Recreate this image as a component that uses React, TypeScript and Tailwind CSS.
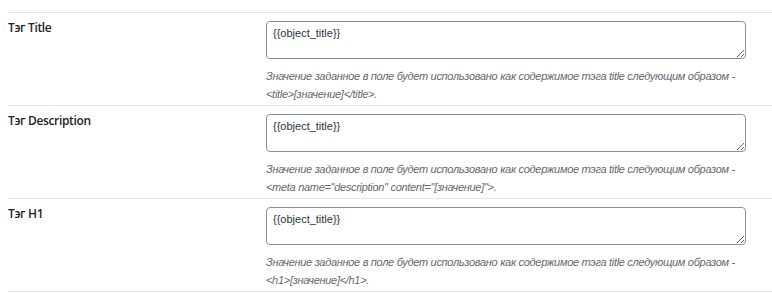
const rows = [
  {
    label: "Тэг Title",
    value: "{{object_title}}",
    tag: (
      <>
        &lt;title&gt;[значение]&lt;/title&gt;.
      </>
    ),
  },
  {
    label: "Тэг Description",
    value: "{{object_title}}",
    tag: (
      <>
        &lt;meta name="description" content="[значение]"&gt;.
      </>
    ),
  },
  {
    label: "Тэг H1",
    value: "{{object_title}}",
    tag: (
      <>
        &lt;h1&gt;[значение]&lt;/h1&gt;.
      </>
    ),
  },
];

function Row({ label, value, tag }: { label: string; value: string; tag: React.ReactNode }) {
  return (
    <div className="flex border-t border-[#e3e3e3] pt-2 pb-[2px]">
      <div className="w-[258px] shrink-0 -mt-[2px] font-['Open_Sans',sans-serif] text-[12px] leading-[18px] font-semibold tracking-[-0.35px] text-[#1d2327]">
        {label}
      </div>
      <div className="flex-1">
        <textarea
          defaultValue={value}
          className="block h-[38px] w-[480px] rounded-[4px] border border-[#8c8f94] px-[6px] py-[4px] font-['Liberation_Sans',sans-serif] text-[11px] leading-[15px] text-[#2c3338] outline-none"
        />
        <p className="mt-2 font-['Liberation_Sans',sans-serif] text-[11px] leading-[18px] tracking-[-0.3px] text-[#646970] italic">
          Значение заданное в поле будет использовано как содержимое тэга title следующим образом -
          <br />
          {tag}
        </p>
      </div>
    </div>
  );
}

export default function App() {
  return (
    <div className="h-[293px] w-[772px] overflow-hidden bg-white pl-2">
      <div className="h-[12px] overflow-hidden pl-[258px]">
        <p className="-mt-[13px] font-['Liberation_Sans',sans-serif] text-[11px] leading-[18px] tracking-[-0.3px] text-[#646970] italic">
          объектов.
        </p>
      </div>
      {rows.map((r) => (
        <Row key={r.label} {...r} />
      ))}
      <div className="border-t border-[#e3e3e3]" />
    </div>
  );
}
